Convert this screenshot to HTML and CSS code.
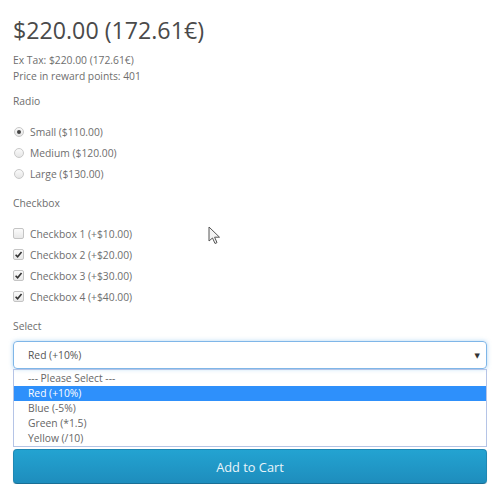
FILE: index.html
```html
<!DOCTYPE html>
<html>
<head>
<meta charset="utf-8">
<link rel="stylesheet" href="styles.css">
</head>
<body>
<div class="product">
  <h1 class="price">$220.00 (172.61€)</h1>
  <ul class="price-meta">
    <li>Ex Tax: $220.00 (172.61€)</li>
    <li>Price in reward points: 401</li>
  </ul>

  <div class="group">
    <div class="label">Radio</div>
    <ul class="choices">
      <li><span class="radio on"></span>Small ($110.00)</li>
      <li><span class="radio"></span>Medium ($120.00)</li>
      <li><span class="radio"></span>Large ($130.00)</li>
    </ul>
  </div>

  <div class="group">
    <div class="label">Checkbox</div>
    <ul class="choices">
      <li><span class="check"></span>Checkbox 1 (+$10.00)</li>
      <li><span class="check on"><svg viewBox="0 0 10 10" width="9" height="9"><path d="M1.8 5.2 L4 7.6 L8.4 2.2" fill="none" stroke="#333" stroke-width="1.8"/></svg></span>Checkbox 2 (+$20.00)</li>
      <li><span class="check on"><svg viewBox="0 0 10 10" width="9" height="9"><path d="M1.8 5.2 L4 7.6 L8.4 2.2" fill="none" stroke="#333" stroke-width="1.8"/></svg></span>Checkbox 3 (+$30.00)</li>
      <li><span class="check on"><svg viewBox="0 0 10 10" width="9" height="9"><path d="M1.8 5.2 L4 7.6 L8.4 2.2" fill="none" stroke="#333" stroke-width="1.8"/></svg></span>Checkbox 4 (+$40.00)</li>
    </ul>
  </div>

  <div class="group select-group">
    <div class="label label-select">Select</div>
    <div class="select">
      <span>Red (+10%)</span>
      <span class="arrow">▼</span>
    </div>
    <ul class="dropdown">
      <li>--- Please Select ---</li>
      <li class="active">Red (+10%)</li>
      <li>Blue (-5%)</li>
      <li>Green (*1.5)</li>
      <li>Yellow (/10)</li>
    </ul>
  </div>

  <button class="cart">Add to Cart</button>

  <svg class="cursor" width="13" height="19" viewBox="0 0 13 19"><path d="M1 1 L1 15 L4.5 12 L7 17.5 L9 16.6 L6.6 11.2 L11.5 11.2 Z" fill="#f4f4f4" stroke="#555" stroke-width="1"/></svg>
</div>
</body>
</html>
```
FILE: styles.css
```css
html, body {
  margin: 0;
  padding: 0;
  background: #fff;
}
body {
  font-family: "Open Sans", "DejaVu Sans", sans-serif;
  font-size: 10.3px;
  color: #6e6e6e;
}
.product {
  position: relative;
  padding: 0 13px;
}
.price {
  margin: 15px 0 0;
  font-size: 23.2px;
  line-height: 30px;
  font-weight: 400;
  color: #4a4a4a;
}
.price-meta {
  list-style: none;
  margin: 7px 0 0;
  padding: 0;
}
.price-meta li {
  line-height: 16px;
}
.group {
  margin-top: 9px;
}
.label {
  line-height: 17px;
  margin-bottom: 11px;
}
.choices {
  list-style: none;
  margin: 0;
  padding: 0;
}
.choices li {
  display: flex;
  align-items: center;
  height: 21px;
}
.group + .group {
  margin-top: 11px;
}
.radio {
  width: 10px;
  height: 10px;
  border-radius: 50%;
  border: 1px solid #c8c8c8;
  background: linear-gradient(#fafafa, #e6e6e6);
  margin: 0 6px 0 1px;
  display: flex;
  align-items: center;
  justify-content: center;
  box-sizing: border-box;
  flex: none;
}
.radio.on::after {
  content: "";
  width: 4px;
  height: 4px;
  border-radius: 50%;
  background: #444;
}
.check {
  width: 11px;
  height: 11px;
  border-radius: 2px;
  border: 1px solid #c4c4c4;
  background: linear-gradient(#fbfbfb, #e8e8e8);
  margin-right: 6px;
  box-sizing: border-box;
  display: flex;
  align-items: center;
  justify-content: center;
  flex: none;
}
.label-select {
  margin-bottom: 6px;
}
.select {
  height: 28px;
  box-sizing: border-box;
  border: 1px solid #7fb6e8;
  border-radius: 4px;
  box-shadow: 0 0 4px rgba(102, 175, 233, 0.5);
  display: flex;
  align-items: center;
  justify-content: space-between;
  padding: 0 6px 0 14px;
  color: #555;
}
.arrow {
  font-size: 7px;
  color: #333;
}
.dropdown {
  list-style: none;
  margin: 0;
  padding: 1px 0;
  border: 1px solid #b5c4e6;
  height: 78px;
  box-sizing: border-box;
}
.dropdown li {
  height: 15px;
  line-height: 15px;
  padding-left: 14px;
  color: #666;
}
.dropdown li.active {
  background: #2e90fb;
  color: #fff;
}
.cart {
  display: block;
  width: 100%;
  height: 35px;
  margin-top: 2px;
  border: 1px solid #1f88b4;
  border-bottom-color: #1a6f95;
  border-radius: 4px;
  background: linear-gradient(#23a3d1, #1e8dbd);
  color: #e8f4fa;
  font-family: "Open Sans", "DejaVu Sans", sans-serif;
  font-size: 12.8px;
  box-shadow: 0 1px 1px rgba(0,0,0,0.15);
}
.cursor {
  position: absolute;
  left: 208px;
  top: 211px;
}
```
